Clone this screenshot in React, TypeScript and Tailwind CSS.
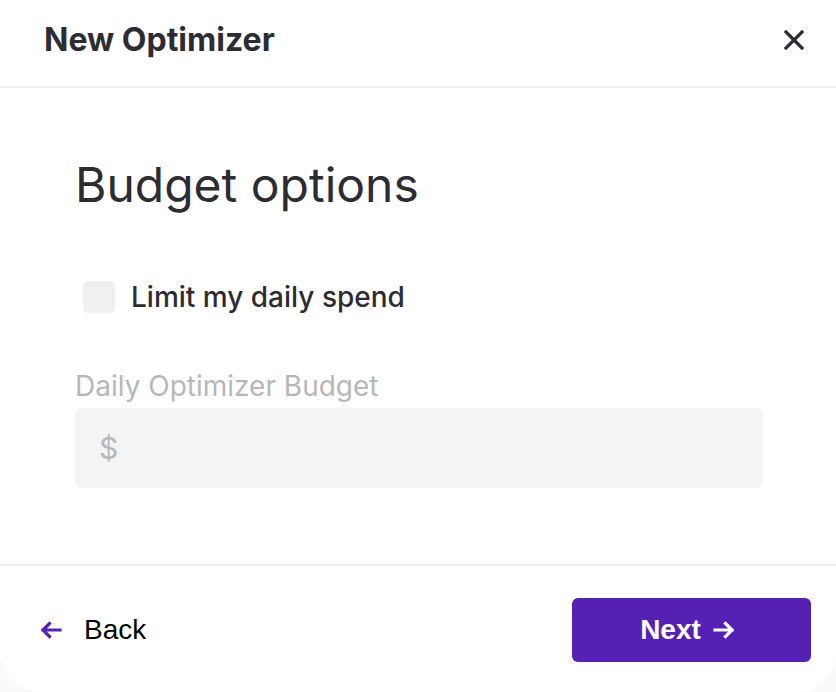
import React from "react";

const ArrowLeft = () => (
  <svg width="22" height="18" viewBox="0 0 22 18" fill="none">
    <path d="M20 9H3M9.5 2.5L3 9l6.5 6.5" stroke="#5521b5" strokeWidth="3.2" strokeLinecap="square" />
  </svg>
);

const ArrowRight = () => (
  <svg width="22" height="18" viewBox="0 0 22 18" fill="none">
    <path d="M2 9h17M12.5 2.5L19 9l-6.5 6.5" stroke="#ffffff" strokeWidth="3.2" strokeLinecap="square" />
  </svg>
);

const App = () => {
  return (
    <div className="min-h-[692px] w-[836px] bg-[#fafafa]">
      <div className="flex h-[692px] flex-col overflow-hidden rounded-b-[40px] bg-white">
        <div className="flex h-[88px] items-center justify-between border-b-2 border-[#efefef] pb-[7px] pl-[44px] pr-[30px]">
          <h1 className="font-['Inter',sans-serif] text-[32px] font-bold text-[#2d2c33]">New Optimizer</h1>
          <button className="flex h-[24px] w-[24px] items-center justify-center">
            <svg width="22" height="22" viewBox="0 0 22 22" fill="none">
              <path d="M3 3l16 16M19 3L3 19" stroke="#2d2c33" strokeWidth="3.2" strokeLinecap="square" />
            </svg>
          </button>
        </div>

        <div className="flex flex-1 flex-col pl-[75px] pr-[73px] pt-[68px] font-['Inter',sans-serif]">
          <h2 className="text-[48px] font-normal leading-[58px] text-[#2d2c33]">Budget options</h2>

          <label className="mt-[67px] flex items-center gap-[16px] pl-[8px]">
            <span className="h-[32px] w-[32px] rounded-[5px] bg-[#f0f0f0]" />
            <span className="text-[28px] font-medium leading-[32px] text-[#2d2c33]">Limit my daily spend</span>
          </label>

          <div className="mt-[56px] text-[28px] leading-[34px] text-[#b7b7ba]">Daily Optimizer Budget</div>
          <div className="mt-[5px] flex h-[80px] items-center rounded-[8px] bg-[#f4f4f4] pl-[24px]">
            <span className="text-[30px] text-[#b7b7ba]">$</span>
          </div>
        </div>

        <div className="flex items-center justify-between border-t-2 border-[#efefef] pb-[30px] pl-[40px] pr-[25px] pt-[32px] font-['Liberation_Sans',Arial,sans-serif]">
          <button className="flex items-center gap-[22px]">
            <ArrowLeft />
            <span className="text-[28px] text-black">Back</span>
          </button>
          <button className="flex h-[64px] w-[239px] items-center justify-center gap-[12px] rounded-[6px] bg-[#5521b5] pr-[8px]">
            <span className="text-[28px] font-bold text-white">Next</span>
            <ArrowRight />
          </button>
        </div>
      </div>
    </div>
  );
};

export default App;
